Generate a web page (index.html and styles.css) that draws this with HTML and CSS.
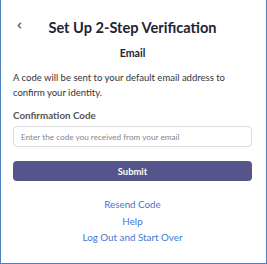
FILE: index.html
```html
<!DOCTYPE html>
<html lang="en">
<head>
    <meta charset="UTF-8">
    <title>Set Up 2-Step Verification</title>
    <link rel="stylesheet" href="styles.css">
</head>
<body>
    <div class="panel">
        <div class="header">
            <a class="back" href="#">
                <svg width="5" height="7" viewBox="0 0 5 7"><path d="M4 0.7 L1.3 3.5 L4 6.3" fill="none" stroke="#6b6b70" stroke-width="1.5"/></svg>
            </a>
            <h1>Set Up 2-Step Verification</h1>
            <span></span>
        </div>
        <h2>Email</h2>
        <p class="intro">A code will be sent to your default email address to confirm your identity.</p>
        <label class="field-label" for="code">Confirmation Code</label>
        <input type="text" id="code" placeholder="Enter the code you received from your email">
        <button class="submit-btn">Submit</button>
        <div class="links">
            <a href="#">Resend Code</a>
            <a href="#">Help</a>
            <a href="#">Log Out and Start Over</a>
        </div>
    </div>
</body>
</html>
```

FILE: styles.css
```css
html, body {
    margin: 0;
    height: 100%;
}
body {
    font-family: Lato, "Open Sans", sans-serif;
    color: #232333;
    background: #fff;
}
.panel {
    box-sizing: border-box;
    height: 264px;
    border: 1px solid #4f7fbf;
    border-top: none;
    padding: 18px 14px 0 12px;
}
.header {
    display: grid;
    grid-template-columns: 1fr auto 1fr;
    align-items: center;
}
.back {
    display: flex;
    padding-left: 4px;
    margin-top: -5px;
}
h1 {
    margin: 0;
    font-size: 14.6px;
    font-weight: 700;
    line-height: 20px;
}
h2 {
    margin: 8px 0 0;
    font-size: 10.6px;
    font-weight: 700;
    text-align: center;
    line-height: 14px;
}
.intro {
    margin: 10px 0 0;
    font-size: 9.5px;
    line-height: 15px;
    color: #333;
}
.field-label {
    display: block;
    margin-top: 8px;
    font-size: 9.8px;
    font-weight: 700;
    color: #555;
    line-height: 14px;
}
#code {
    display: block;
    box-sizing: border-box;
    width: 100%;
    height: 21px;
    margin-top: 4px;
    padding: 0 7px;
    border: 1px solid #dcdce0;
    border-radius: 4px;
    font-family: inherit;
    font-size: 8.2px;
}
#code::placeholder {
    color: #85858c;
}
.submit-btn {
    display: block;
    width: 100%;
    height: 20px;
    margin-top: 14px;
    border: none;
    border-radius: 4px;
    background: #55558c;
    color: #fff;
    font-family: inherit;
    font-size: 9.4px;
    font-weight: 700;
}
.links {
    display: flex;
    flex-direction: column;
    align-items: center;
    margin-top: 15px;
}
.links a {
    color: #3f76d6;
    text-decoration: none;
    font-size: 9.8px;
    line-height: 16.5px;
}
```
